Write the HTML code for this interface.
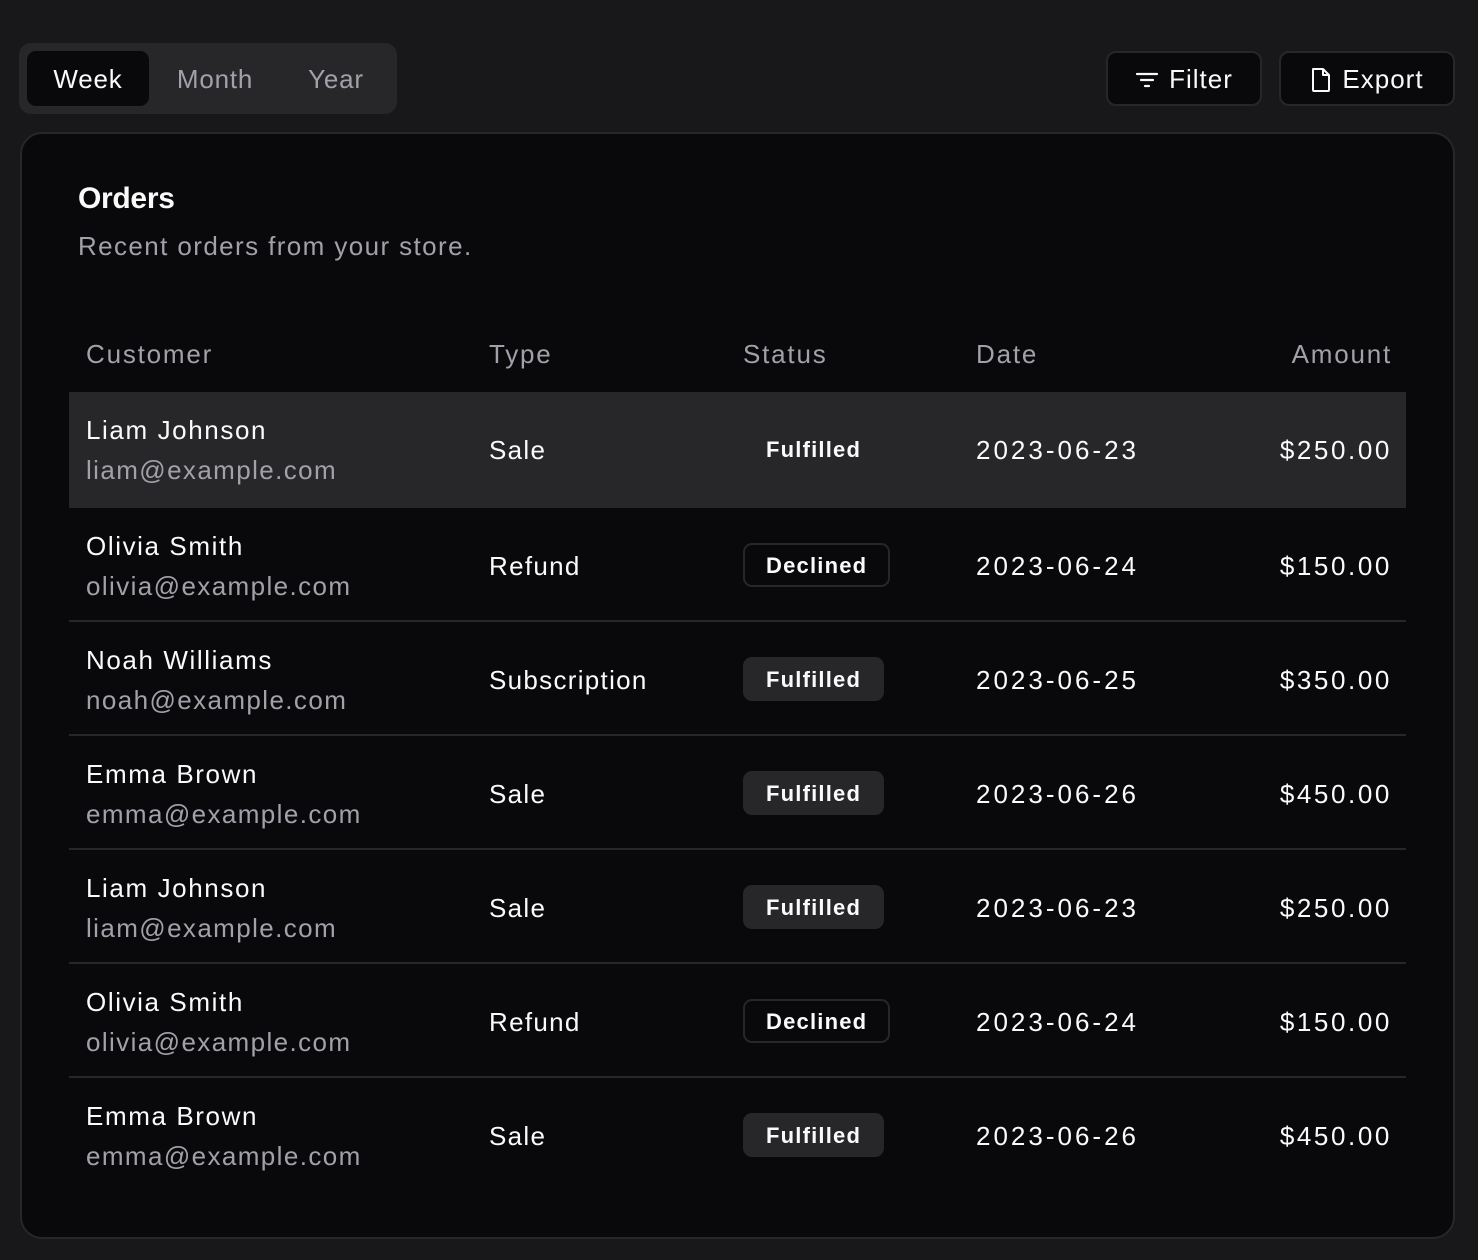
<!DOCTYPE html>
<html><head><meta charset="utf-8"><style>
*{box-sizing:border-box;margin:0;padding:0}
body{width:1478px;height:1260px;background:#18181b;font-family:"Liberation Sans",sans-serif;color:#fafafa;position:relative;overflow:hidden}
.tabs{position:absolute;left:19px;top:43px;width:378px;height:71px;background:#27272a;border-radius:12px}
.tab{position:absolute;top:8px;height:55px;line-height:57px;font-size:26px;color:#a1a1aa;text-align:center;letter-spacing:0.8px}
.tab.on{background:#09090b;color:#fafafa;border-radius:9px;left:8px;width:122px}
.btn{position:absolute;top:51px;height:55px;border:2px solid #27272a;border-radius:10px;background:#09090b;font-size:26px;display:flex;align-items:center;justify-content:center;gap:10px;letter-spacing:1px;padding-top:2px}
.card{position:absolute;left:20px;top:132px;width:1435px;height:1107px;background:#09090b;border:2px solid #27272a;border-radius:22px}
h1{position:absolute;left:56px;top:48px;font-size:30px;font-weight:bold;letter-spacing:-0.3px}
.sub{position:absolute;left:56px;top:97px;font-size:26px;color:#a1a1aa;letter-spacing:1.4px}
.row{position:absolute;left:47px;width:1337px;height:114px;border-bottom:2px solid #27272a}
.c{position:absolute;font-size:26px;letter-spacing:1.3px}
.hdr .c{color:#a1a1aa;top:0;letter-spacing:1.8px}
.name{left:17px;top:23px;letter-spacing:1.6px}
.mail{left:17px;top:63px;color:#a1a1aa;letter-spacing:1.4px}
.type{left:420px;top:43px}
.date{left:907px;top:43px;letter-spacing:3px}
.amt{right:14px;top:43px;letter-spacing:2.6px}
.badge{position:absolute;left:674px;top:35px;height:44px;line-height:41px;padding:0 21px;font-size:22px;font-weight:bold;border-radius:9px;border:2px solid transparent;letter-spacing:1.2px}
.f{background:#27272a}
.d{border-color:#27272a}
</style></head><body>
<div class="tabs">
<div class="tab on">Week</div>
<div class="tab" style="left:140px;width:112px">Month</div>
<div class="tab" style="left:272px;width:90px">Year</div>
</div>
<div class="btn" style="left:1106px;width:156px"><svg width="24" height="20" viewBox="0 0 24 20" fill="none" stroke="#fafafa" stroke-width="2.2" stroke-linecap="round"><path d="M2 4h20M6 10h12M10 16h4"/></svg>Filter</div>
<div class="btn" style="left:1279px;width:176px"><svg width="22" height="26" viewBox="0 0 22 26" fill="none" stroke="#fafafa" stroke-width="2" stroke-linejoin="round"><path d="M3 2h10l6 6v15a1 1 0 0 1-1 1H4a1 1 0 0 1-1-1V3a1 1 0 0 1 1-1z M13 2v6h6"/></svg>Export</div>
<div class="card">
<h1>Orders</h1>
<div class="sub">Recent orders from your store.</div>
<div class="row hdr" style="top:178px;height:80px;border:none"><div class="c" style="left:17px;top:27px">Customer</div><div class="c" style="left:420px;top:27px">Type</div><div class="c" style="left:674px;top:27px">Status</div><div class="c" style="left:907px;top:27px">Date</div><div class="c" style="right:14px;top:27px">Amount</div></div>
<div class="row" style="top:258px;background:#27272a;height:116px;border:none"><div class="c name">Liam Johnson</div><div class="c mail">liam@example.com</div><div class="c type">Sale</div><div class="badge f">Fulfilled</div><div class="c date">2023-06-23</div><div class="c amt">$250.00</div></div>
<div class="row" style="top:374px"><div class="c name">Olivia Smith</div><div class="c mail">olivia@example.com</div><div class="c type">Refund</div><div class="badge d">Declined</div><div class="c date">2023-06-24</div><div class="c amt">$150.00</div></div>
<div class="row" style="top:488px"><div class="c name">Noah Williams</div><div class="c mail">noah@example.com</div><div class="c type">Subscription</div><div class="badge f">Fulfilled</div><div class="c date">2023-06-25</div><div class="c amt">$350.00</div></div>
<div class="row" style="top:602px"><div class="c name">Emma Brown</div><div class="c mail">emma@example.com</div><div class="c type">Sale</div><div class="badge f">Fulfilled</div><div class="c date">2023-06-26</div><div class="c amt">$450.00</div></div>
<div class="row" style="top:716px"><div class="c name">Liam Johnson</div><div class="c mail">liam@example.com</div><div class="c type">Sale</div><div class="badge f">Fulfilled</div><div class="c date">2023-06-23</div><div class="c amt">$250.00</div></div>
<div class="row" style="top:830px"><div class="c name">Olivia Smith</div><div class="c mail">olivia@example.com</div><div class="c type">Refund</div><div class="badge d">Declined</div><div class="c date">2023-06-24</div><div class="c amt">$150.00</div></div>
<div class="row" style="top:944px;border:none"><div class="c name">Emma Brown</div><div class="c mail">emma@example.com</div><div class="c type">Sale</div><div class="badge f">Fulfilled</div><div class="c date">2023-06-26</div><div class="c amt">$450.00</div></div>
</div>
</body></html>
